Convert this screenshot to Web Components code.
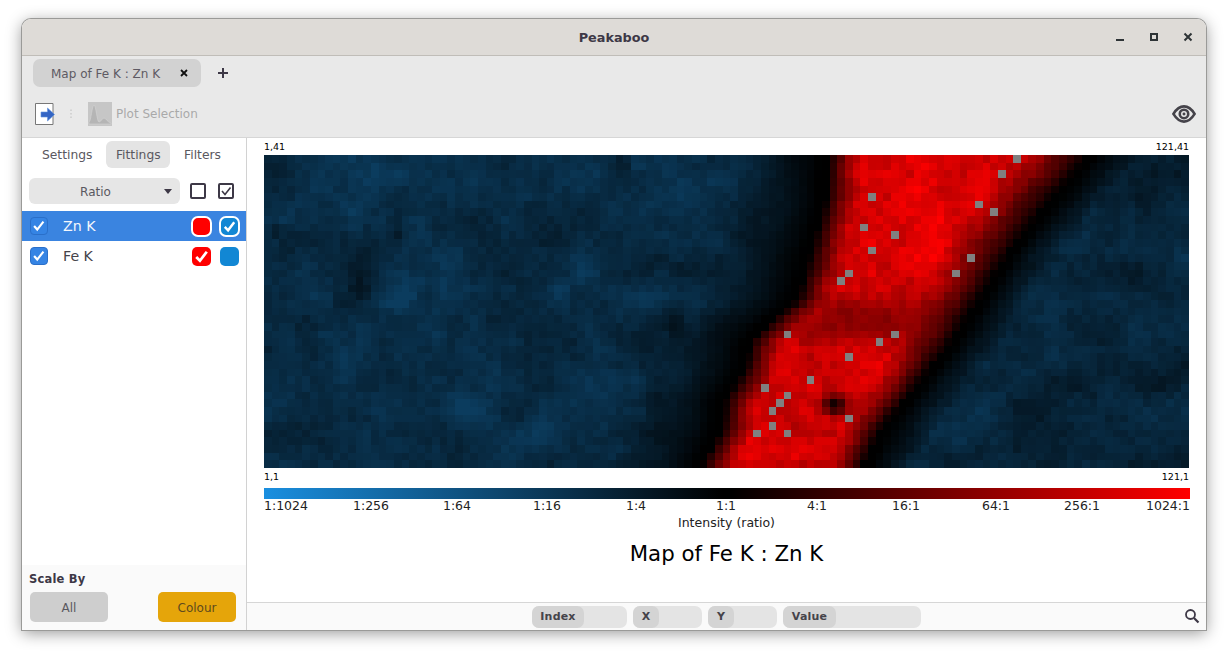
<!DOCTYPE html>
<html>
    <head>
        <style>
            html, body { margin: 0; height: 100%; background: #fff; overflow: hidden; }
            body { padding: 19px 22px 0; box-sizing: border-box; font-family: "DejaVu Sans", sans-serif; color: #45434a; }
        </style>
    </head>
    <body>
        <pk-window>
            <pk-titlebar slot="title">Peakaboo</pk-titlebar>
            <pk-tabs slot="tabs"><pk-tab>Map of Fe K : Zn K</pk-tab></pk-tabs>
            <pk-toolbar slot="toolbar"></pk-toolbar>
            <pk-sidebar slot="side"></pk-sidebar>
            <pk-mapview slot="main"></pk-mapview>
            <pk-status slot="main"></pk-status>
        </pk-window>
        <script>
            class PkWindow extends HTMLElement {
                constructor() {
                    super();
                    const shadowRoot = this.attachShadow({ mode: 'open' });
                    shadowRoot.innerHTML = `
                        <style>
                            :host { display: flex; flex-direction: column; width: 1184px; height: 611px; background: #fff;
                                border-radius: 9px 9px 0 0; box-shadow: 0 0 0 1px #9a9a98, 0 3px 16px rgba(0,0,0,.42); overflow: hidden; }
                            .body { flex: 1; display: flex; min-height: 0; }
                            .main { flex: 1; display: flex; flex-direction: column; min-width: 0; }
                        </style>
                        <slot name="title"></slot>
                        <slot name="tabs"></slot>
                        <slot name="toolbar"></slot>
                        <div class="body">
                            <slot name="side"></slot>
                            <div class="main"><slot name="main"></slot></div>
                        </div>
                    `;
                }
            }
            window.customElements.define('pk-window', PkWindow);

            class PkTitlebar extends HTMLElement {
                constructor() {
                    super();
                    const shadowRoot = this.attachShadow({ mode: 'open' });
                    shadowRoot.innerHTML = `
                        <style>
                            :host { display: grid; grid-template-columns: 1fr auto 1fr; align-items: center; height: 37px; box-sizing: border-box; flex: none;
                                background: #dedbd7; border-bottom: 1px solid #c0bdb8; color: #3d3846; font-size: 12.800px; font-weight: bold; }
                            .ctl { grid-column: 3; justify-self: end; display: flex; align-items: center; gap: 20px; padding-right: 11px; }
                            svg { display: block; width: 14px; height: 14px; }
                        </style>
                        <span style="grid-column:2"><slot></slot></span>
                        <div class="ctl">
                            <svg viewBox="0 0 14 14"><rect x="3" y="9" width="8" height="2" fill="#2e3436"/></svg>
                            <svg viewBox="0 0 14 14"><path d="M3 3h8v8H3zM5 5v4h4V5z" fill="#2e3436" fill-rule="evenodd"/></svg>
                            <svg viewBox="0 0 14 14"><path d="M3.500 3.500l7 7M10.500 3.500l-7 7" stroke="#2e3436" stroke-width="2"/></svg>
                        </div>
                    `;
                }
            }
            window.customElements.define('pk-titlebar', PkTitlebar);

            class PkTabs extends HTMLElement {
                constructor() {
                    super();
                    const shadowRoot = this.attachShadow({ mode: 'open' });
                    shadowRoot.innerHTML = `
                        <style>
                            :host { display: flex; align-items: center; gap: 15px; height: 34px; flex: none; padding: 0 0 0 11px; background: #e9e9e9; }
                            svg { display: block; width: 14px; height: 14px; }
                        </style>
                        <slot></slot>
                        <svg viewBox="0 0 14 14"><path d="M7 2v10M2 7h10" stroke="#3d3846" stroke-width="2"/></svg>
                    `;
                }
            }
            window.customElements.define('pk-tabs', PkTabs);

            class PkTab extends HTMLElement {
                constructor() {
                    super();
                    const shadowRoot = this.attachShadow({ mode: 'open' });
                    shadowRoot.innerHTML = `
                        <style>
                            :host { display: flex; align-items: center; justify-content: space-between; box-sizing: border-box; width: 168px; height: 28px;
                                padding: 0 12px 0 18px; background: #d2d2d2; border-radius: 7px; font-size: 12px; color: #5e5a63; }
                            span { padding-top: 1px; }
                            svg { display: block; width: 10px; height: 10px; }
                        </style>
                        <span><slot></slot></span>
                        <svg viewBox="0 0 10 10"><path d="M2 2l6 6M8 2l-6 6" stroke="#111" stroke-width="1.800"/></svg>
                    `;
                }
            }
            window.customElements.define('pk-tab', PkTab);

            class PkToolbar extends HTMLElement {
                constructor() {
                    super();
                    const shadowRoot = this.attachShadow({ mode: 'open' });
                    shadowRoot.innerHTML = `
                        <style>
                            :host { display: flex; align-items: center; height: 48px; flex: none; box-sizing: border-box; padding: 1px 10px 0 13px;
                                background: #e9e9e9; border-bottom: 1px solid #d6d6d6; font-size: 12px; color: #a9a9a9; }
                            svg { display: block; flex: none; }
                            .sep { margin: 0 15px; }
                            .lbl { margin-left: 4px; flex: 1; }
                        </style>
                        <svg width="20" height="24" viewBox="0 0 20 24">
                            <path d="M.5 1.500h17.500v21H.5z" fill="#fff" stroke="#777" stroke-width="1"/>
                            <path d="M6 10h6.500V6l7 6.500-7 6.500v-4H6z" fill="#3465c4" stroke="#5f92dc" stroke-width=".6"/>
                        </svg>
                        <svg class="sep" width="3" height="10" viewBox="0 0 3 10"><path d="M1 .5v1.500M1 4v1.500M1 7.500V9" stroke="#bdbdbd" stroke-width="1"/></svg>
                        <svg width="24" height="24" viewBox="0 0 24 24">
                            <rect width="24" height="24" fill="#c6c6c6"/>
                            <path d="M1 22V20C3 20 4 3 6 3S9 20 11 20 14 16 16 16 19 20 23 21V22z" fill="#b5b5b5" stroke="#d5d5d5" stroke-width=".6"/>
                        </svg>
                        <span class="lbl">Plot Selection</span>
                        <svg width="24" height="18" viewBox="0 0 26 19.500">
                            <path d="M1.500 9.700C5 4 9 1.500 13 1.500S21 4 24.500 9.700C21 15.500 17 18 13 18S5 15.500 1.500 9.700z" fill="none" stroke="#45434a" stroke-width="2.800"/>
                            <circle cx="13" cy="9.700" r="4.600" fill="none" stroke="#45434a" stroke-width="2.800"/>
                            <circle cx="13" cy="9.700" r="1.600" fill="#45434a"/>
                        </svg>
                    `;
                }
            }
            window.customElements.define('pk-toolbar', PkToolbar);

            class PkCheck extends HTMLElement {
                constructor() {
                    super();
                    const shadowRoot = this.attachShadow({ mode: 'open' });
                    shadowRoot.innerHTML = `
                        <style>
                            :host { display: block; box-sizing: border-box; width: 18px; height: 18px; border-radius: 4px;
                                background: #3584e4; border: 1px solid #2a6fc9; flex: none; }
                            svg { display: block; width: 100%; height: 100%; }
                        </style>
                        <svg viewBox="0 0 18 18"><path d="M3.500 9l3.500 4 7-9" fill="none" stroke="#fff" stroke-width="2.400"/></svg>
                    `;
                }
            }
            window.customElements.define('pk-check', PkCheck);

            class PkFitting extends HTMLElement {
                constructor() {
                    super();
                    const selected = this.hasAttribute('selected');
                    const tick = '<svg viewBox="0 0 18 18"><path d="M4 9.500l3.500 3.500 6.500-8.500" fill="none" stroke="#fff" stroke-width="2.600"/></svg>';
                    const shadowRoot = this.attachShadow({ mode: 'open' });
                    shadowRoot.innerHTML = `
                        <style>
                            :host { display: flex; align-items: center; height: 30px; padding: 0 6px 0 8px; font-size: 14.200px; color: #45434a; }
                            :host([selected]) { background: #3a84e0; color: #f4f7fc; }
                            .name { flex: 1; margin-left: 15px; }
                            .sw { flex: none; box-sizing: border-box; border-radius: 5px; }
                            .red { width: 19px; height: 19px; background: #f00; }
                            .blue { width: 19px; height: 19px; background: #1287d4; margin-left: 9px; margin-right: 1px; }
                            :host([selected]) .red { width: 21px; height: 21px; border: 2px solid #fff; border-radius: 7px; margin-left: -1px; }
                            :host([selected]) .blue { width: 21px; height: 21px; border: 2px solid #fff; border-radius: 7px; margin-left: 7px; margin-right: 0; }
                            svg { display: block; width: 100%; height: 100%; }
                        </style>
                        <pk-check></pk-check>
                        <span class="name"><slot></slot></span>
                        <div class="sw red">${selected ? '' : tick}</div>
                        <div class="sw blue">${selected ? tick : ''}</div>
                    `;
                }
            }
            window.customElements.define('pk-fitting', PkFitting);

            class PkSidebar extends HTMLElement {
                constructor() {
                    super();
                    const shadowRoot = this.attachShadow({ mode: 'open' });
                    shadowRoot.innerHTML = `
                        <style>
                            :host { display: flex; flex-direction: column; flex: none; box-sizing: border-box; width: 225px; border-right: 1px solid #d2d2d2;
                                background: #fff; font-size: 12.300px; color: #5a5860; }
                            .tabs { display: flex; align-items: center; gap: 14px; height: 27px; margin-top: 3px; padding-left: 20px; }
                            .tabs span { line-height: 29px; height: 27px; border-radius: 6px; }
                            .tabs .on { background: #e4e4e4; padding: 0 9.500px; }
                            .combo { display: flex; align-items: center; gap: 10px; height: 26px; margin: 10px 12px 7px 7px; }
                            .drop { flex: 1; height: 26px; line-height: 28px; display: flex; justify-content: center; position: relative; background: #e6e6e6; border-radius: 6px; font-size: 12px; padding-right: 18px; box-sizing: border-box; }
                            .drop i { position: absolute; right: 8px; top: 11px; border: 4px solid transparent; border-top: 5px solid #3d3846; border-bottom: 0; }
                            .box { box-sizing: border-box; width: 16px; height: 16px; border: 2px solid #3d3846; border-radius: 2px; flex: none; }
                            .box + .box { margin-left: 2px; }
                            .box svg { display: block; width: 12px; height: 12px; }
                            .list { flex: 1; }
                            .scale { flex: none; height: 65px; box-sizing: border-box; background: #fafafa; padding: 8px 10px 0 7px; }
                            .scale b { display: block; font-size: 11.500px; line-height: 13px; color: #3d3846; letter-spacing: .2px; }
                            .btns { display: flex; justify-content: space-between; margin: 6px 0 0 1px; }
                            .btns span { width: 78px; height: 30px; line-height: 32px; text-align: center; border-radius: 5px; background: #cecece; font-size: 12px; }
                            .btns .on { background: #e5a50a; color: #5e4a1e; }
                        </style>
                        <div class="tabs"><span>Settings</span><span class="on">Fittings</span><span>Filters</span></div>
                        <div class="combo">
                            <div class="drop">Ratio<i></i></div>
                            <div class="box"></div>
                            <div class="box"><svg viewBox="0 0 12 12"><path d="M2 6l3 3.500 5.500-7" fill="none" stroke="#3d3846" stroke-width="1.600"/></svg></div>
                        </div>
                        <div class="list">
                            <pk-fitting selected>Zn K</pk-fitting>
                            <pk-fitting>Fe K</pk-fitting>
                        </div>
                        <div class="scale">
                            <b>Scale By</b>
                            <div class="btns"><span>All</span><span class="on">Colour</span></div>
                        </div>
                    `;
                }
            }
            window.customElements.define('pk-sidebar', PkSidebar);

            // map data is generated: smooth noise + a red diagonal band, same seed every run
            class PkHeatmap extends HTMLElement {
                constructor() {
                    super();
                    const shadowRoot = this.attachShadow({ mode: 'open' });
                    shadowRoot.innerHTML = `
                        <style>
                            :host { display: block; width: 925px; height: 313px; }
                            canvas { display: block; }
                        </style>
                        <canvas width="925" height="313"></canvas>
                    `;
                    this.draw(shadowRoot.querySelector('canvas').getContext('2d'));
                }
                draw(ctx) {
                    const cols = 121, rows = 41, cw = 925 / cols, ch = 313 / rows;
                    let seed = 91;
                    const rand = () => { seed = (seed * 16807) % 2147483647; return seed / 2147483647; };
                    const grid = (w, h) => Array.from({ length: h }, () => Array.from({ length: w }, rand));
                    const coarse = grid(24, 12), mid = grid(50, 20), fine = grid(cols, rows), fine2 = grid(cols, rows);
                    const smooth = t => t * t * (3 - 2 * t);
                    const sample = (g, u, v) => {
                        const x = u * (g[0].length - 1), y = v * (g.length - 1);
                        const i = Math.min(Math.floor(x), g[0].length - 2), j = Math.min(Math.floor(y), g.length - 2);
                        const a = smooth(x - i), b = smooth(y - j);
                        return (g[j][i] * (1 - a) + g[j][i + 1] * a) * (1 - b) + (g[j + 1][i] * (1 - a) + g[j + 1][i + 1] * a) * b;
                    };
                    const table = (t, y) => {
                        for (let i = 1; i < t.length; i++) {
                            if (y <= t[i][0]) {
                                const k = (y - t[i - 1][0]) / (t[i][0] - t[i - 1][0]);
                                return t[i - 1][1] + (t[i][1] - t[i - 1][1]) * k;
                            }
                        }
                        return t[t.length - 1][1];
                    };
                    const leftEdge = [[155, 828], [200, 826], [250, 812], [300, 798], [320, 772], [340, 752], [370, 745], [400, 725], [430, 722], [468, 700]];
                    const rightEdge = [[155, 1090], [200, 1050], [250, 1010], [300, 978], [350, 945], [400, 905], [430, 880], [468, 862]];
                    const clamp = (v, a, b) => Math.max(a, Math.min(b, v));
                    const gauss = (x, y, cx, cy, sx, sy) => Math.exp(-((x - cx) ** 2) / (2 * sx * sx) - ((y - cy) ** 2) / (2 * sy * sy));
                    const bright = [[372, 178, 20, 18, .11], [355, 222, 7, 10, .09], [404, 295, 12, 14, .14], [470, 410, 16, 12, .1], [444, 283, 7, 16, .07],
                        [557, 290, 7, 10, .09], [580, 263, 7, 14, .07], [597, 347, 10, 14, .08], [637, 163, 6, 7, .11], [624, 260, 7, 9, .07],
                        [690, 420, 12, 24, .08], [295, 345, 12, 12, .05], [560, 190, 10, 8, .05]];
                    const dark = [[362, 278, 13, 20, .13], [398, 235, 5, 5, .14], [276, 230, 7, 5, .1], [657, 383, 8, 30, .09], [674, 317, 6, 16, .1], [1150, 180, 60, 30, .06]];
                    const grey = [[1017, 158], [1002, 173], [872, 197], [979, 204], [994, 211], [864, 227], [895, 235], [872, 250], [971, 258],
                        [849, 273], [956, 273], [841, 281], [788, 334], [895, 334], [880, 342], [849, 357], [810, 380], [765, 388], [788, 395],
                        [780, 403], [773, 411], [849, 418], [773, 426], [757, 433], [788, 433]]
                        .map(p => Math.floor((p[0] - 264) / cw) + ':' + Math.floor((p[1] - 155) / ch));
                    for (let r = 0; r < rows; r++) {
                        for (let c = 0; c < cols; c++) {
                            const x = 264 + (c + .5) * cw, y = 155 + (r + .5) * ch, u = c / (cols - 1), v = r / (rows - 1);
                            const L = table(leftEdge, y), R = table(rightEdge, y);
                            const rampR = 35 + 45 * (468 - y) / 313;
                            // blue background
                            let b = .16 + .12 * sample(coarse, u, v) + .08 * sample(mid, u, v) + .07 * fine[r][c];
                            for (const g of bright) b += g[4] * gauss(x, y, g[0], g[1], g[2], g[3]);
                            for (const g of dark) b -= g[4] * gauss(x, y, g[0], g[1], g[2], g[3]);
                            if (x > R) b -= .04;
                            // fade to black next to the band
                            const dl = L - x, dr = x - R;
                            let fade = 1;
                            if (dl > 0) fade = clamp((dl - 8) / 85, 0, 1);
                            if (dr > 0) fade = clamp((dr - 8) / 45, 0, 1);
                            if (x >= L && x <= R) fade = 0;
                            b = clamp(b, .02, .42) * fade;
                            // red band
                            let t = 0;
                            if (x >= L && x <= R) {
                                const inL = clamp((x - L) / 34, 0, 1), inR = clamp((R - x) / rampR, 0, 1);
                                const body = .64 + .18 * sample(mid, 1 - u, v) + .16 * fine2[r][c] + .08 * gauss(x, y, 925, 215, 45, 60);
                                t = Math.min(inL * (1.2 - .2 * inL), inR * (1.2 - .2 * inR)) * clamp(body, 0, 1);
                                t *= 1 - .95 * gauss(x, y, 835, 405, 9, 7);
                                t *= 1 - .35 * gauss(x, y, 850, 320, 60, 14);
                            }
                            let col;
                            if (grey.includes(c + ':' + r)) col = 'rgb(128,128,128)';
                            else if (t > .015) col = `rgb(${Math.round(255 * t)},0,0)`;
                            else col = `rgb(${Math.round(26 * b)},${Math.round(143 * b)},${Math.round(224 * b)})`;
                            ctx.fillStyle = col;
                            const x0 = Math.round(c * cw), x1 = Math.round((c + 1) * cw), y0 = Math.round(r * ch), y1 = Math.round((r + 1) * ch);
                            ctx.fillRect(x0, y0, x1 - x0, y1 - y0);
                        }
                    }
                }
            }
            window.customElements.define('pk-heatmap', PkHeatmap);

            class PkMapview extends HTMLElement {
                constructor() {
                    super();
                    const ticks = ['1:1024', '1:256', '1:64', '1:16', '1:4', '1:1', '4:1', '16:1', '64:1', '256:1', '1024:1'];
                    const shadowRoot = this.attachShadow({ mode: 'open' });
                    shadowRoot.innerHTML = `
                        <style>
                            :host { display: block; flex: 1; padding: 0 16px 0 17px; background: #fff; color: #000; min-height: 0; }
                            .corners { display: flex; justify-content: space-between; font-size: 9.500px; height: 17px; line-height: 17px; width: 925px; }
                            .bar { width: 926px; height: 11px; margin-top: 3px;
                                background: linear-gradient(90deg, #1a8fe0 0, #000 49.500%, #000 50.500%, #f00 100%); }
                            .ticks { display: grid; grid-template-columns: 88px 82px 90px 90px 88px 92px 90px 88px 92px 80px 92px; margin-left: -22px; font-size: 12.500px; line-height: 14px; text-align: center; color: #222; }
                            .axis { width: 925px; text-align: center; font-size: 12.500px; line-height: 14px; margin-top: 3px; color: #222; }
                            .title { width: 925px; text-align: center; font-size: 21.300px; line-height: 24px; margin-top: 12px; }
                        </style>
                        <div class="corners"><span>1,41</span><span>121,41</span></div>
                        <pk-heatmap></pk-heatmap>
                        <div class="corners"><span>1,1</span><span>121,1</span></div>
                        <div class="bar"></div>
                        <div class="ticks">${ticks.map(t => `<span>${t}</span>`).join('')}</div>
                        <div class="axis">Intensity (ratio)</div>
                        <div class="title">Map of Fe K : Zn K</div>
                    `;
                }
            }
            window.customElements.define('pk-mapview', PkMapview);

            class PkField extends HTMLElement {
                constructor() {
                    super();
                    const shadowRoot = this.attachShadow({ mode: 'open' });
                    shadowRoot.innerHTML = `
                        <style>
                            :host { display: flex; height: 22px; border-radius: 7px; background: #e4e4e4; font-size: 11px; font-weight: bold; color: #45434a; }
                            span { display: block; box-sizing: border-box; height: 22px; line-height: 22px; text-align: center; border-radius: 7px; background: #d4d4d4; letter-spacing: .2px; }
                        </style>
                        <span style="width:${this.getAttribute('label')}px"><slot></slot></span>
                    `;
                }
            }
            window.customElements.define('pk-field', PkField);

            class PkStatus extends HTMLElement {
                constructor() {
                    super();
                    const shadowRoot = this.attachShadow({ mode: 'open' });
                    shadowRoot.innerHTML = `
                        <style>
                            :host { display: flex; align-items: center; justify-content: center; gap: 6px; position: relative; flex: none; height: 28px; box-sizing: border-box;
                                background: #fafafa; border-top: 1px solid #d6d6d6; }
                            svg { position: absolute; right: 6px; top: 5px; display: block; }
                        </style>
                        <pk-field label="52" style="width:95px">Index</pk-field>
                        <pk-field label="26" style="width:69px">X</pk-field>
                        <pk-field label="26" style="width:69px">Y</pk-field>
                        <pk-field label="53" style="width:138px">Value</pk-field>
                        <svg width="16" height="16" viewBox="0 0 16 16"><circle cx="6.500" cy="6.500" r="4.500" fill="none" stroke="#3d3846" stroke-width="1.800"/><path d="M10 10l4.500 4.500" stroke="#3d3846" stroke-width="2.200"/></svg>
                    `;
                }
            }
            window.customElements.define('pk-status', PkStatus);
        </script>
    </body>
</html>
